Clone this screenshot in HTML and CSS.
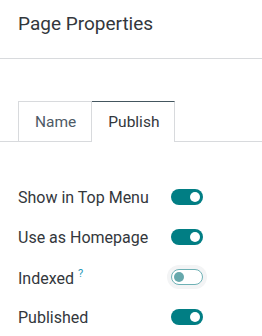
FILE: index.html
```html
<!DOCTYPE html>
<html>
<head>
<meta charset="utf-8">
<link rel="stylesheet" href="styles.css">
</head>
<body>
<div class="dialog">
  <header class="head"><h1 class="title">Page Properties</h1></header>
  <div class="body">
    <ul class="tabs">
      <li class="tab">Name</li>
      <li class="tab active">Publish</li>
    </ul>
    <div class="rows">
      <div class="row"><span class="label">Show in Top Menu</span><span class="switch on"></span></div>
      <div class="row"><span class="label">Use as Homepage</span><span class="switch on"></span></div>
      <div class="row"><span class="label">Indexed<sup class="help">?</sup></span><span class="switch off"></span></div>
      <div class="row"><span class="label">Published</span><span class="switch on"></span></div>
    </div>
  </div>
</div>
</body>
</html>
```
FILE: styles.css
```css
* { box-sizing: border-box; }
html, body { margin: 0; padding: 0; background: #fff; }
body { font-family: Roboto, "Noto Sans", sans-serif; color: #374151; }
.head {
  height: 59px;
  border-bottom: 1px solid #d8dadd;
  padding: 0 18px;
  display: flex;
  align-items: center;
}
.title {
  margin: 0;
  font-size: 19px;
  font-weight: 400;
  color: #33373c;
  position: relative;
  top: -6px;
}
.body { padding-top: 42px; }
.tabs {
  list-style: none;
  margin: 0;
  padding: 0 0 0 18px;
  display: flex;
  border-bottom: 1px solid #d8dadd;
}
.tab {
  height: 40px;
  padding: 0 15px 0 16px;
  display: flex;
  align-items: center;
  font-size: 15.5px;
  color: #4e5a66;
  border: 1px solid #d8dadd;
  border-bottom: none;
  margin-bottom: -1px;
  background: #fff;
}
.tab + .tab { border-left: none; }
.tab.active {
  color: #33373c;
  border-top: 1px solid #44565f;
  height: 41px;
}
.rows { padding: 35px 0 0 18px; }
.row {
  display: grid;
  grid-template-columns: 153px auto;
  align-items: center;
  height: 40px;
}
.label { font-size: 16px; color: #33373c; }
.help { font-size: 11px; color: #2797b8; margin-left: 4px; vertical-align: 7px; }
.switch {
  position: relative;
  width: 32px;
  height: 16px;
  border-radius: 8px;
  display: block;
}
.switch::after {
  content: "";
  position: absolute;
  top: 3px;
  width: 10px;
  height: 10px;
  border-radius: 50%;
}
.switch.on { background: #017e84; }
.switch.on::after { right: 3px; background: #fff; }
.switch.off {
  background: #fff;
  border: 1px solid #6eb1b5;
  box-shadow: 0 0 0 4px #f3f4f5;
}
.switch.off::after { left: 2px; top: 2px; background: #66a8ac; }
```
